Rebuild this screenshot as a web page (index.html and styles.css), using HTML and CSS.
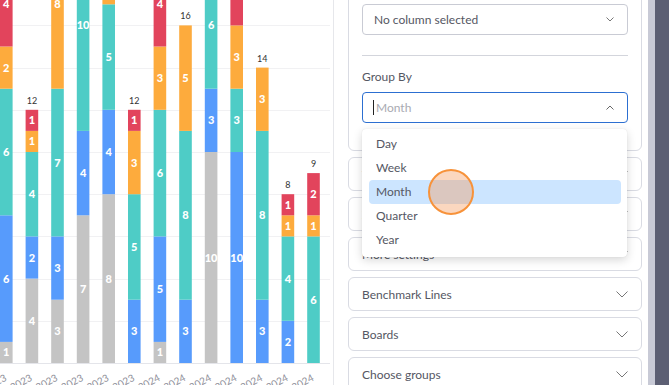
FILE: index.html
```html
<!DOCTYPE html>
<html lang="en">
<head>
<meta charset="utf-8">
<title>Chart settings</title>
<link rel="stylesheet" href="styles.css">
</head>
<body>
<div class="page">
  <div class="chart">
    <svg id="chart" width="333" height="385" viewBox="0 0 333 385"></svg>
  </div>
  <aside class="panel">
    <div class="card card-main">
      <div class="select">
        <span class="select-text">No column selected</span>
        <svg class="chev-sm" width="8" height="5" viewBox="0 0 8 5"><path d="M0.5 0.5 L4 4 L7.5 0.5" fill="none" stroke="#777" stroke-width="1"/></svg>
      </div>
      <div class="divider"></div>
      <div class="field-label">Group By</div>
      <div class="select-wrap">
        <div class="select focused">
          <span class="caret"></span><span class="placeholder">Month</span>
          <svg class="chev-sm" width="8" height="5" viewBox="0 0 8 5"><path d="M0.5 4.5 L4 1 L7.5 4.5" fill="none" stroke="#666" stroke-width="1"/></svg>
        </div>
        <ul class="menu">
          <li class="option">Day</li>
          <li class="option">Week</li>
          <li class="option active">Month</li>
          <li class="option">Quarter</li>
          <li class="option">Year</li>
          <li class="click-mark"></li>
        </ul>
      </div>
    </div>
    <div class="card"><span>Y-Axis</span><svg class="chev" width="12" height="7" viewBox="0 0 12 7"><path d="M0.5 0.5 L6 6 L11.5 0.5" fill="none" stroke="#777" stroke-width="1"/></svg></div>
    <div class="card"><span>X-Axis</span><svg class="chev" width="12" height="7" viewBox="0 0 12 7"><path d="M0.5 0.5 L6 6 L11.5 0.5" fill="none" stroke="#777" stroke-width="1"/></svg></div>
    <div class="card"><span>More settings</span><svg class="chev" width="12" height="7" viewBox="0 0 12 7"><path d="M0.5 0.5 L6 6 L11.5 0.5" fill="none" stroke="#777" stroke-width="1"/></svg></div>
    <div class="card"><span>Benchmark Lines</span><svg class="chev" width="12" height="7" viewBox="0 0 12 7"><path d="M0.5 0.5 L6 6 L11.5 0.5" fill="none" stroke="#777" stroke-width="1"/></svg></div>
    <div class="card"><span>Boards</span><svg class="chev" width="12" height="7" viewBox="0 0 12 7"><path d="M0.5 0.5 L6 6 L11.5 0.5" fill="none" stroke="#777" stroke-width="1"/></svg></div>
    <div class="card"><span>Choose groups</span><svg class="chev" width="12" height="7" viewBox="0 0 12 7"><path d="M0.5 0.5 L6 6 L11.5 0.5" fill="none" stroke="#777" stroke-width="1"/></svg></div>
  </aside>
  <div class="track"></div>
  <div class="backdrop"></div>
</div>
<script src="chart.js"></script>
</body>
</html>
```
FILE: chart.js
```js
(function () {
  var NS = 'http://www.w3.org/2000/svg';
  var svg = document.getElementById('chart');
  var base = 363, u = 21.1, pitch = 25.6, w = 12.6;
  var colors = ['#c4c4c4', '#579bfc', '#4eccc6', '#fdab3d', '#e2445c'];
  // gray, blue, teal, orange, red
  var data = [
    [1, 6, 6, 2, 4], [4, 2, 4, 1, 1], [3, 3, 7, 8, 0], [7, 4, 10, 0, 0],
    [8, 4, 5, 3, 1], [0, 3, 5, 3, 1], [1, 5, 6, 3, 4], [0, 3, 8, 5, 0],
    [10, 3, 6, 1, 0], [0, 10, 3, 3, 4], [0, 3, 8, 3, 0], [0, 2, 4, 1, 1],
    [0, 0, 6, 1, 2]
  ];
  var labels = ['Jun 2023', 'Jul 2023', 'Aug 2023', 'Sep 2023', 'Oct 2023', 'Nov 2023',
    'Jan 2024', 'Feb 2024', 'Mar 2024', 'Apr 2024', 'May 2024', 'Jun 2024', 'Jul 2024'];
  function el(name, attrs, text) {
    var e = document.createElementNS(NS, name);
    for (var k in attrs) e.setAttribute(k, attrs[k]);
    if (text !== undefined) e.textContent = text;
    svg.appendChild(e);
    return e;
  }
  for (var g = 1; g <= 8; g++) {
    var gy = Math.round(base - g * 2 * u) + 0.5;
    el('line', { x1: 0, x2: 330, y1: gy, y2: gy, stroke: '#f1f1f3', 'stroke-width': 1 });
  }
  el('line', { x1: 0, x2: 330, y1: base + 0.5, y2: base + 0.5, stroke: '#e4e5ea', 'stroke-width': 1 });
  data.forEach(function (bar, i) {
    var x = i * pitch, y = base, total = 0;
    bar.forEach(function (v, c) {
      if (!v) return;
      var h = v * u;
      y -= h;
      total += v;
      el('rect', { x: x, y: y, width: w, height: h, fill: colors[c] });
      el('text', { x: x + w / 2, y: y + h / 2 + 4, 'class': 'seg-label' }, String(v));
    });
    el('text', { x: x + w / 2, y: y - 6, 'class': 'total-label' }, String(total));
    var ax = x + w / 2 + 1, ay = 380;
    el('text', { x: ax, y: ay, 'class': 'axis-label', transform: 'rotate(-28 ' + ax + ' ' + ay + ')' }, labels[i]);
  });
})();
```
FILE: styles.css
```css
* { box-sizing: border-box; }
html, body { margin: 0; padding: 0; background: #fff; }
body {
  font-family: Lato, "Open Sans", Arial, sans-serif;
  color: #4b4c55;
  overflow: hidden;
}
.page {
  display: flex;
  width: 669px;
  height: 385px;
  overflow: hidden;
}
.chart {
  width: 334px;
  flex: none;
  border-right: 1px solid #e6e7eb;
  overflow: hidden;
}
.chart svg { display: block; }
.seg-label {
  fill: #fff;
  font-family: Lato, Arial, sans-serif;
  font-weight: 900;
  font-size: 11px;
  text-anchor: middle;
}
.total-label {
  fill: #333;
  font-family: Lato, Arial, sans-serif;
  font-size: 9px;
  text-anchor: middle;
}
.axis-label {
  fill: #8f909a;
  font-family: Lato, Arial, sans-serif;
  font-size: 10px;
  text-anchor: end;
}
.panel {
  width: 314px;
  flex: none;
  padding: 0 6px 0 14px;
  display: flex;
  flex-direction: column;
  gap: 6px;
  background: #fff;
}
.card {
  flex: none;
  height: 34px;
  border: 1px solid #d9dbe3;
  border-radius: 6px;
  padding: 0 13px;
  display: flex;
  align-items: center;
  justify-content: space-between;
  font-size: 12px;
  color: #555763;
}
.card-main {
  height: auto;
  margin-top: -9px;
  padding: 12px 13px 27px;
  display: block;
}
.select {
  height: 31px;
  border: 1px solid #c9cbd4;
  border-radius: 4px;
  display: flex;
  align-items: center;
  justify-content: space-between;
  padding: 0 13px 0 11px;
  font-size: 12px;
  color: #555763;
  background: #fff;
}
.select.focused {
  border-color: #2c6fd1;
  justify-content: flex-start;
  padding-left: 10px;
}
.caret {
  width: 1px;
  height: 15px;
  background: #222;
  margin-right: 2px;
}
.placeholder {
  color: #a9aab2;
  flex: 1;
}
.divider {
  height: 1px;
  background: #d3d5dc;
  margin: 20px 0 13px;
}
.field-label {
  font-size: 12px;
  line-height: 16px;
  color: #555763;
  margin-bottom: 7px;
}
.select-wrap { position: relative; }
.menu {
  position: absolute;
  top: 37px;
  left: 0;
  right: 1px;
  margin: 0;
  padding: 3px 6px 5px 7px;
  list-style: none;
  background: #fff;
  border-radius: 4px;
  box-shadow: 0 3px 10px rgba(0, 0, 0, 0.16), 0 0 1px rgba(0, 0, 0, 0.12);
  z-index: 5;
}
.option {
  height: 24px;
  line-height: 24px;
  padding-left: 7px;
  font-size: 12px;
  color: #555763;
  border-radius: 4px;
}
.option.active { background: #cce5ff; }
.click-mark {
  position: absolute;
  left: 66px;
  top: 40px;
  width: 46px;
  height: 46px;
  border-radius: 50%;
  border: 2px solid #f7923a;
  background: rgba(244, 150, 86, 0.38);
}
.track {
  width: 7px;
  flex: none;
  background: #c8cad6;
}
.backdrop {
  flex: 1;
  background: #5c5f73;
}
```
